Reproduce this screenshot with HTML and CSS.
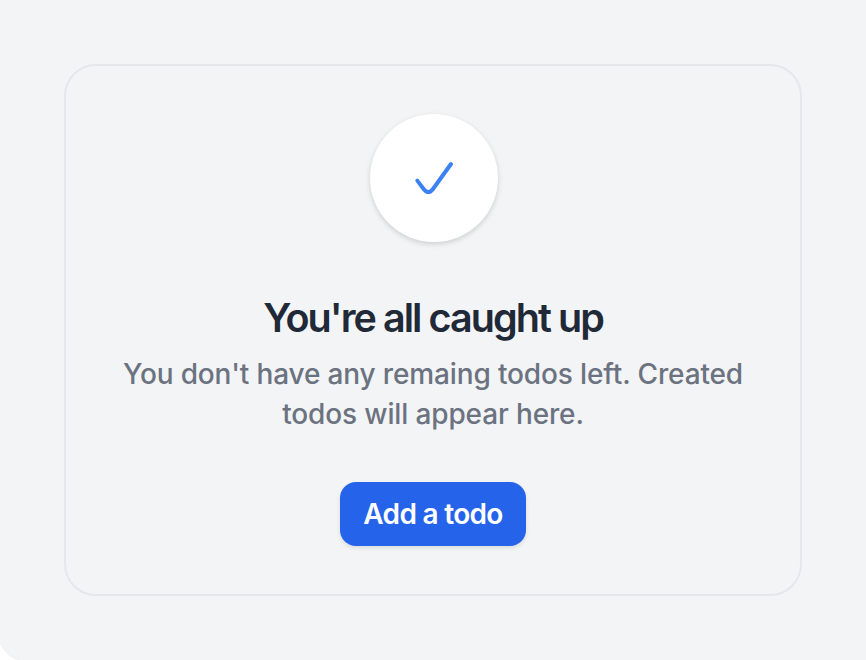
FILE: index.html
```html
<!DOCTYPE html>
<html lang="en">
<head>
<meta charset="utf-8">
<title>Todos</title>
<link rel="stylesheet" href="styles.css">
</head>
<body>
<main class="panel">
  <section class="empty">
    <div class="badge">
      <svg class="check" viewBox="0 0 48 48" fill="none" stroke="currentColor" stroke-width="4" stroke-linecap="round" stroke-linejoin="round"><path d="M7.3 26.6L13.8 35.2Q18.5 41 22.8 35.2L41 10"/></svg>
    </div>
    <h1 class="title">You're all caught up</h1>
    <p class="text">You don't have any remaing todos left. Created<br>todos will appear here.</p>
    <button class="button" type="button">Add a todo</button>
  </section>
</main>
</body>
</html>
```

FILE: styles.css
```css
* { box-sizing: border-box; }
body {
  margin: 0;
  background: #fff;
  font-family: Inter, "Liberation Sans", sans-serif;
  overflow: hidden;
}
.panel {
  height: 662px;
  margin-left: -2px;
  padding: 64px 64px 64px 66px;
  background: #f3f4f6;
  border-bottom-left-radius: 32px;
  box-shadow: 0 0 2px rgba(0, 0, 0, .14);
}
.empty {
  display: flex;
  flex-direction: column;
  align-items: center;
  width: 738px;
  height: 532px;
  padding-top: 48px;
  border: 2px solid #e5e7eb;
  border-radius: 32px;
  text-align: center;
}
.badge {
  display: flex;
  align-items: center;
  justify-content: center;
  width: 128px;
  height: 128px;
  margin-left: 2px;
  border-radius: 50%;
  background: #fff;
  box-shadow: 0 2px 6px rgba(0, 0, 0, .1), 0 2px 4px rgba(0, 0, 0, .06);
}
.check { width: 48px; height: 48px; color: #3b82f6; }
.title {
  margin: 48px 0 0;
  color: #1f2937;
  font-size: 39.5px;
  font-weight: 600;
  line-height: 56px;
  letter-spacing: -1.95px;
  white-space: nowrap;
}
.text {
  margin: 8px 0 0;
  color: #6b7280;
  font-size: 28px;
  font-weight: 500;
  line-height: 40px;
  letter-spacing: -.14px;
  white-space: nowrap;
}
.button {
  width: 186px;
  height: 64px;
  margin-top: 48px;
  padding: 0;
  border: 0;
  border-radius: 16px;
  background: #2563eb;
  box-shadow: 0 2px 4px rgba(0, 0, 0, .1);
  color: #fff;
  font: 600 28px/40px Inter, "Liberation Sans", sans-serif;
  letter-spacing: -.7px;
}
```
